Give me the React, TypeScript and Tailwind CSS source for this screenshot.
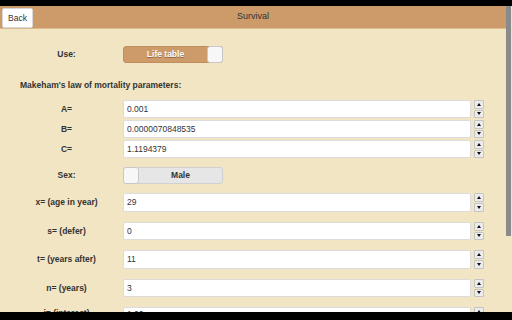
const font = { fontFamily: '"Liberation Sans", Arial, sans-serif' }

function Spinner() {
  return (
    <div className="flex flex-col ml-[3px] w-[10px] h-full gap-[1px]">
      <div className="flex-1 flex items-center justify-center border border-[#c4c4c4] bg-[#ececec] rounded-[1px]">
        <div className="w-0 h-0 border-l-[2.5px] border-r-[2.5px] border-b-[3px] border-l-transparent border-r-transparent border-b-[#111]" />
      </div>
      <div className="flex-1 flex items-center justify-center border border-[#c4c4c4] bg-[#ececec] rounded-[1px]">
        <div className="w-0 h-0 border-l-[2.5px] border-r-[2.5px] border-t-[3px] border-l-transparent border-r-transparent border-t-[#111]" />
      </div>
    </div>
  )
}

function Row({ label, value, h, mt }: { label: string; value: string; h: string; mt: string }) {
  return (
    <div className={`flex items-center shrink-0 ${h} ${mt}`}>
      <div className="w-[113px] ml-[10px] text-center font-bold text-[8.5px] text-[#333]">{label}</div>
      <div className="w-[348px] h-full bg-white border border-[#dcdcdc] rounded-[2px] flex items-center pl-[3px] text-[8.5px] text-[#333]">
        {value}
      </div>
      <Spinner />
    </div>
  )
}

export default function App() {
  return (
    <div className="w-[512px] h-[320px] bg-black flex flex-col overflow-hidden" style={font}>
      <div className="h-[6px] shrink-0" />
      <div className="h-[306px] shrink-0 flex">
        <div className="w-[506px] bg-[#f1e5c3] flex flex-col overflow-hidden">
          {/* header */}
          <div className="h-[23px] shrink-0 bg-[#cd9a69] border-b border-[#dcb98f] flex items-center relative">
            <button className="absolute left-[2px] top-[2px] w-[31px] h-[20px] bg-white border border-[#d8d8d8] rounded-[2px] text-[8.5px] text-[#333] flex items-center justify-center">
              Back
            </button>
            <div className="w-full text-center text-[9px] text-[#333]">Survival</div>
          </div>

          {/* Use toggle */}
          <div className="flex items-center shrink-0 mt-[17px] h-[17px]">
            <div className="w-[113px] ml-[10px] text-center font-bold text-[8.5px] text-[#333]">Use:</div>
            <div className="w-[100px] h-[17px] bg-[#cd9a69] border border-[#c08e5e] rounded-[3px] flex items-center">
              <div className="flex-1 text-center font-bold text-[8.5px] text-white [text-shadow:0_1px_0_#8a6540]">Life table</div>
              <div className="w-[16px] h-[17px] bg-[#f7f7f7] border border-[#c8c8c8] rounded-[3px] -mr-[1px]" />
            </div>
          </div>

          <div className="mt-[16px] h-[12px] shrink-0 pl-[20px] flex items-center font-bold text-[8.5px] text-[#333]">
            Makeham's law of mortality parameters:
          </div>

          <Row label="A=" value="0.001" h="h-[18px]" mt="mt-[9px]" />
          <Row label="B=" value="0.0000070848535" h="h-[18px]" mt="mt-[2px]" />
          <Row label="C=" value="1.1194379" h="h-[18px]" mt="mt-[2px]" />

          {/* Sex toggle */}
          <div className="flex items-center shrink-0 mt-[9px] h-[17px]">
            <div className="w-[113px] ml-[10px] text-center font-bold text-[8.5px] text-[#333]">Sex:</div>
            <div className="w-[100px] h-[17px] bg-[#e6e6e6] border border-[#d0d0d0] rounded-[3px] flex items-center">
              <div className="w-[16px] h-[17px] bg-[#f7f7f7] border border-[#c8c8c8] rounded-[3px] -ml-[1px]" />
              <div className="flex-1 text-center font-bold text-[8.5px] text-[#333]">Male</div>
            </div>
          </div>

          <Row label="x= (age in year)" value="29" h="h-[19px]" mt="mt-[9px]" />
          <Row label="s= (defer)" value="0" h="h-[18px]" mt="mt-[10px]" />
          <Row label="t= (years after)" value="11" h="h-[19px]" mt="mt-[10px]" />
          <Row label="n= (years)" value="3" h="h-[18px]" mt="mt-[10px]" />
          <div className="flex items-start shrink-0 mt-[10px] h-[18px]">
            <div className="w-[113px] ml-[10px] text-center font-bold text-[8.5px] leading-[8px] pt-[2px] text-[#333]">i= (interest)</div>
            <div className="w-[348px] h-full bg-white border border-[#dcdcdc] rounded-[2px] pl-[3px] pt-[2px] text-[8.5px] leading-[8px] text-[#333]">1.00</div>
            <Spinner />
          </div>
        </div>
        <div className="w-[6px] bg-[#f1e5c3] flex flex-col">
          <div className="w-[5px] h-[230px] bg-[#8a8a8a]" />
        </div>
      </div>
      <div className="h-[8px] shrink-0" />
    </div>
  )
}
